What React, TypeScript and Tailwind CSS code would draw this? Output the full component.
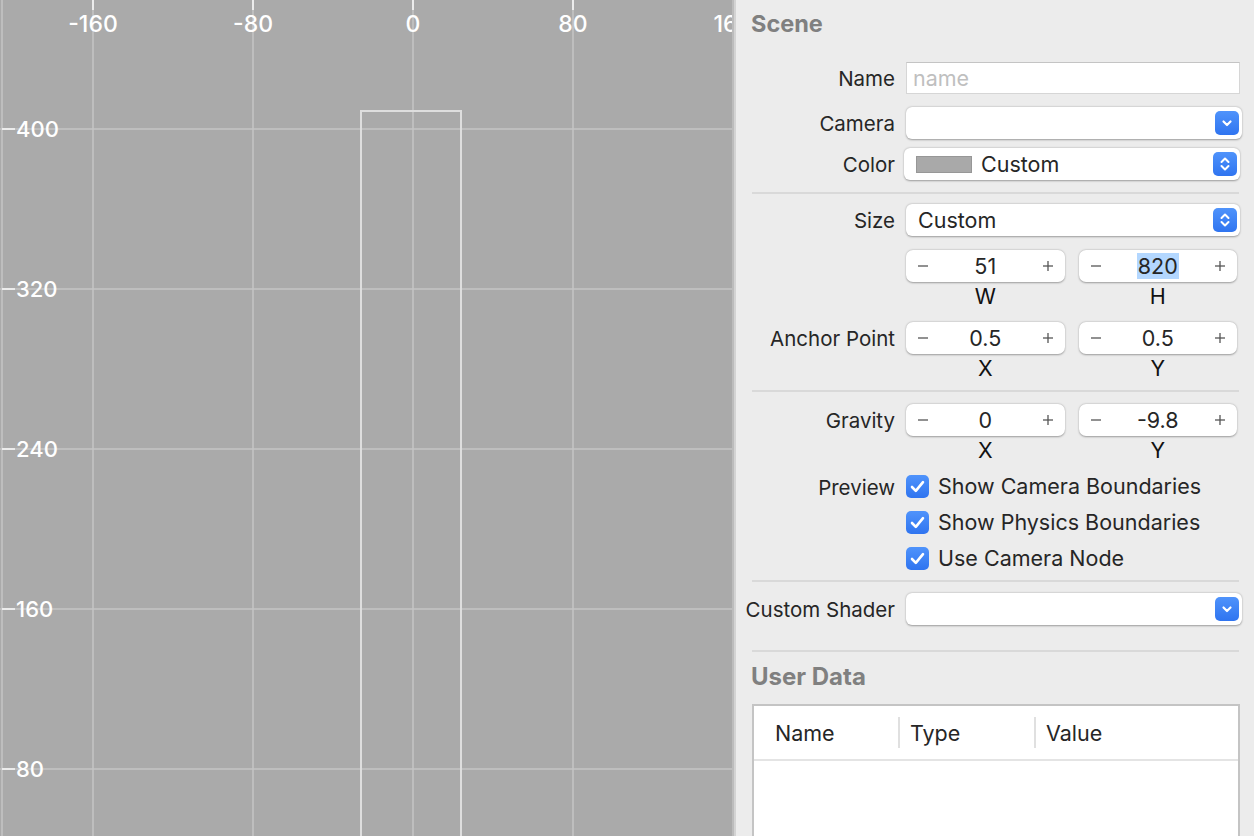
import React from 'react';

const FONT = { fontFamily: 'Inter, "Liberation Sans", "Noto Sans", sans-serif' };

// ── Canvas grid ──────────────────────────────────────────────────────────────
const xs = [
  { x: 93, t: '-160' },
  { x: 253, t: '-80' },
  { x: 413, t: '0' },
  { x: 573, t: '80' },
  { x: 733, t: '160' },
];
const ys = [
  { y: 129, t: '400' },
  { y: 289, t: '320' },
  { y: 449, t: '240' },
  { y: 609, t: '160' },
  { y: 769, t: '80' },
];

function SceneCanvas() {
  return (
    <div className="relative w-[732px] h-full bg-[#aaaaaa] overflow-hidden">
      <svg className="absolute inset-0" width="732" height="836">
        <line x1="2" y1="0" x2="2" y2="836" stroke="#c4c4c4" strokeWidth="1.5" />
        {xs.map((l) => (
          <g key={l.x}>
            <line x1={l.x} y1="0" x2={l.x} y2="836" stroke="#c4c4c4" strokeWidth="1.5" />
            <line x1={l.x} y1="0" x2={l.x} y2="10" stroke="#ececec" strokeWidth="2" />
          </g>
        ))}
        {ys.map((l) => (
          <g key={l.y}>
            <line x1="0" y1={l.y} x2="732" y2={l.y} stroke="#c4c4c4" strokeWidth="1.5" />
            <line x1="2" y1={l.y} x2="15" y2={l.y} stroke="#ececec" strokeWidth="2" />
          </g>
        ))}
        <rect x="361" y="111" width="100" height="760" fill="none" stroke="#dedede" strokeWidth="2" />
      </svg>
      {xs.map((l) => (
        <div
          key={l.t}
          className="absolute top-[10px] h-[28px] w-[80px] -ml-[40px] text-center text-[23px] leading-[28px] text-white font-medium"
          style={{ left: l.x }}
        >
          {l.t}
        </div>
      ))}
      {ys.map((l) => (
        <div
          key={l.t}
          className="absolute left-[16px] h-[28px] -mt-[14px] text-[22px] leading-[28px] text-white font-medium"
          style={{ top: l.y }}
        >
          {l.t}
        </div>
      ))}
    </div>
  );
}

// ── Controls ─────────────────────────────────────────────────────────────────
function BlueButton({ updown }: { updown?: boolean }) {
  return (
    <div className="shrink-0 w-[24px] h-[24px] rounded-[5px] bg-gradient-to-b from-[#4f93fb] to-[#2f74f0] flex items-center justify-center">
      {updown ? (
        <svg width="12" height="16" viewBox="0 0 12 16" fill="none" stroke="white" strokeWidth="2" strokeLinecap="round" strokeLinejoin="round">
          <polyline points="2.5,6 6,2.5 9.5,6" />
          <polyline points="2.5,10 6,13.5 9.5,10" />
        </svg>
      ) : (
        <svg width="12" height="10" viewBox="0 0 12 10" fill="none" stroke="white" strokeWidth="2.2" strokeLinecap="round" strokeLinejoin="round">
          <polyline points="2.5,3.5 6,7 9.5,3.5" />
        </svg>
      )}
    </div>
  );
}

function Popup({ children, updown }: { children?: React.ReactNode; updown?: boolean }) {
  return (
    <div className="h-[32px] rounded-[6px] bg-white shadow-[0_0.5px_2px_rgba(0,0,0,0.35)] flex items-center pl-[12px] pr-[3px]">
      <div className="flex-1 flex items-center gap-[9px] text-[21.5px] leading-[28px] text-[#262626]">{children}</div>
      <BlueButton updown={updown} />
    </div>
  );
}

function Stepper({ value, selected }: { value: string; selected?: boolean }) {
  return (
    <div className="h-[32px] rounded-[7px] bg-white shadow-[0_0.5px_2px_rgba(0,0,0,0.35)] flex items-center px-[10px]">
      <svg width="14" height="14" viewBox="0 0 14 14" stroke="#555" strokeWidth="1.3">
        <line x1="2" y1="7" x2="12" y2="7" />
      </svg>
      <div className="flex-1 flex justify-center">
        <span className={`text-[21.5px] leading-[26px] text-[#262626] px-[1px] ${selected ? 'bg-[#b3d7ff]' : ''}`}>{value}</span>
      </div>
      <svg width="14" height="14" viewBox="0 0 14 14" stroke="#555" strokeWidth="1.3">
        <line x1="2" y1="7" x2="12" y2="7" />
        <line x1="7" y1="2" x2="7" y2="12" />
      </svg>
    </div>
  );
}

function Row({ label, children, className = '' }: { label?: string; children: React.ReactNode; className?: string }) {
  return (
    <div className={`grid grid-cols-[159px_1fr] gap-x-[11px] items-center ${className}`}>
      <div className="h-[32px] pt-[3px] text-right text-[20.5px] leading-[28px] text-[#262626] whitespace-nowrap">{label}</div>
      <div>{children}</div>
    </div>
  );
}

function PairRow({ label, a, b, la, lb, selB }: { label?: string; a: string; b: string; la: string; lb: string; selB?: boolean }) {
  return (
    <>
      <Row label={label} className="mt-[12px]">
        <div className="grid grid-cols-2 gap-x-[14px] w-[331px]">
          <Stepper value={a} />
          <Stepper value={b} selected={selB} />
        </div>
      </Row>
      <div className="h-[28px] pl-[170px]">
        <div className="grid grid-cols-2 gap-x-[14px] w-[331px] h-[28px] items-center text-center text-[21.5px] leading-[28px] text-[#111]">
          <span>{la}</span>
          <span>{lb}</span>
        </div>
      </div>
    </>
  );
}

function Check({ label }: { label: string }) {
  return (
    <div className="h-[36px] flex items-center gap-[9px]">
      <div className="w-[23px] h-[23px] rounded-[5px] bg-gradient-to-b from-[#4f93fb] to-[#2f74f0] flex items-center justify-center">
        <svg width="15" height="13" viewBox="0 0 15 13" fill="none" stroke="white" strokeWidth="2.6" strokeLinecap="round" strokeLinejoin="round">
          <polyline points="2,7 5.8,10.8 13,2.2" />
        </svg>
      </div>
      <span className="text-[21.5px] leading-[28px] text-[#262626]">{label}</span>
    </div>
  );
}

const Sep = ({ className = '' }: { className?: string }) => (
  <div className={`h-[2px] bg-[#d9d9d9] ml-[16px] mr-[1px] ${className}`} />
);

// ── Inspector ────────────────────────────────────────────────────────────────
function Inspector() {
  return (
    <div className="flex-1 h-full bg-[#ececec] pt-[10px] pr-[14px] flex flex-col overflow-hidden">
      <div className="ml-[15px] h-[28px] leading-[28px] text-[23.5px] font-bold text-[#808080]">Scene</div>

      <Row label="Name" className="mt-[24px]">
        <div className="h-[32px] bg-white border border-[#d6d6d6] border-t-[#c4c4c4] flex items-center pl-[6px] text-[21.5px] leading-[28px] text-[#bfbfbf]">
          name
        </div>
      </Row>
      <Row label="Camera" className="mt-[13px]">
        <div className="mr-[-2px]">
          <Popup />
        </div>
      </Row>
      <Row label="Color" className="mt-[9px]">
        <div className="ml-[-2px]">
          <Popup updown>
            <div className="w-[56px] h-[17px] bg-[#a9a9a9] border border-[#979797]" />
            <span>Custom</span>
          </Popup>
        </div>
      </Row>

      <Sep className="mt-[12px]" />

      <Row label="Size" className="mt-[10px]">
        <Popup updown>
          <span>Custom</span>
        </Popup>
      </Row>
      <div className="mt-[2px]">
        <PairRow a="51" b="820" la="W" lb="H" selB />
      </div>
      <PairRow label="Anchor Point" a="0.5" b="0.5" la="X" lb="Y" />

      <Sep className="mt-[8px]" />

      <PairRow label="Gravity" a="0" b="-9.8" la="X" lb="Y" />

      <div className="mt-[4px] grid grid-cols-[159px_1fr] gap-x-[11px]">
        <div className="h-[36px] pt-[3px] flex items-center justify-end text-[20.5px] leading-[28px] text-[#262626]">Preview</div>
        <div>
          <Check label="Show Camera Boundaries" />
          <Check label="Show Physics Boundaries" />
          <Check label="Use Camera Node" />
        </div>
      </div>

      <Sep className="mt-[4px]" />

      <Row label="Custom Shader" className="mt-[11px]">
        <div className="mr-[-2px]">
          <Popup />
        </div>
      </Row>

      <Sep className="mt-[25px]" />

      <div className="ml-[15px] mt-[11px] h-[28px] leading-[28px] text-[24px] font-bold text-[#808080]">User Data</div>

      <div className="ml-[16px] mt-[13px] flex-1 bg-white border-2 border-b-0 border-[#c4c4c4]">
        <div className="h-[55px] border-b-2 border-[#e4e4e4] flex items-center text-[21.5px] leading-[28px] text-[#262626]">
          <div className="w-[144px] pl-[21px]">Name</div>
          <div className="w-[2px] h-[31px] bg-[#e0e0e0]" />
          <div className="w-[134px] pl-[10px]">Type</div>
          <div className="w-[2px] h-[31px] bg-[#e0e0e0]" />
          <div className="flex-1 pl-[10px]">Value</div>
        </div>
      </div>
    </div>
  );
}

export default function App() {
  return (
    <div className="w-[1254px] h-[836px] flex overflow-hidden" style={FONT}>
      <SceneCanvas />
      <div className="w-[2px] h-full bg-[#bcbcbc]" />
      <div className="w-[2px] h-full bg-[#d3d3d3]" />
      <Inspector />
    </div>
  );
}
